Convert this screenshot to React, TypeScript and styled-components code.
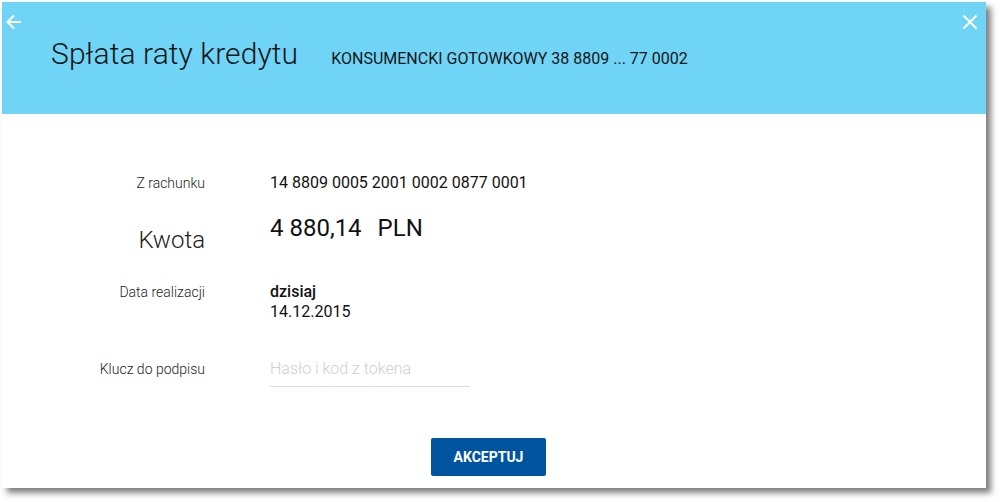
import React from "react";
import styled, { createGlobalStyle } from "styled-components";

const GlobalStyle = createGlobalStyle`
  html, body {
    margin: 0;
    padding: 0;
    background: #ffffff;
    font-family: Roboto, "Noto Sans", "Liberation Sans", sans-serif;
  }
`;

const StyledPage = styled.div`
  width: 1000px;
  height: 502px;
  padding: 2px 0 0 2px;
  box-sizing: border-box;
`;

const StyledDialog = styled.div`
  display: flex;
  flex-direction: column;
  width: 984px;
  height: 486px;
  background: #ffffff;
  box-shadow: 5px 5px 6px rgba(0, 0, 0, 0.5);
  overflow: hidden;
`;

const StyledHeader = styled.header`
  position: relative;
  display: flex;
  align-items: baseline;
  gap: 33px;
  height: 112px;
  box-sizing: border-box;
  padding: 34px 0 0 49px;
  background: #70d4f6;
`;

const StyledTitle = styled.h1`
  margin: 0;
  font-size: 30px;
  font-weight: 300;
  letter-spacing: 0.1px;
  color: #151515;
`;

const StyledSubtitle = styled.span`
  font-size: 16px;
  font-weight: 400;
  color: #151515;
`;

const StyledIconButton = styled.button<{ $side: "left" | "right" }>`
  position: absolute;
  top: 10px;
  ${({ $side }) => ($side === "left" ? "left: 2px;" : "right: 6px;")}
  display: flex;
  padding: 0;
  border: 0;
  background: none;
  color: #ffffff;
  cursor: pointer;
`;

const StyledBody = styled.main`
  display: flex;
  flex-direction: column;
  padding-top: 59px;
`;

const StyledRow = styled.div<{ $gap: number }>`
  display: grid;
  grid-template-columns: 203px 1fr;
  column-gap: 65px;
  align-items: start;
  margin-top: ${({ $gap }) => $gap}px;
`;

const StyledLabel = styled.div<{ $big?: boolean; $offset?: number }>`
  text-align: right;
  font-size: ${({ $big }) => ($big ? 24 : 14)}px;
  line-height: ${({ $big }) => ($big ? 28 : 20)}px;
  font-weight: 300;
  color: #1d1d1d;
  margin-top: ${({ $offset }) => $offset ?? 0}px;
`;

const StyledValue = styled.div<{ $big?: boolean; $strong?: boolean }>`
  font-size: ${({ $big }) => ($big ? 24 : 16)}px;
  line-height: ${({ $big }) => ($big ? 28 : 20)}px;
  font-weight: ${({ $strong }) => ($strong ? 500 : 400)};
  color: #111111;
`;

const StyledCurrency = styled.span`
  margin-left: 16px;
`;

const StyledInput = styled.input`
  width: 200px;
  box-sizing: border-box;
  margin-top: 2px;
  padding: 0 0 7px 0;
  border: 0;
  border-bottom: 1px solid #dddddd;
  outline: none;
  font-family: inherit;
  font-size: 16px;
  line-height: 20px;
  font-weight: 300;
  color: #111;

  &::placeholder {
    color: #cfcfcf;
  }
`;

const StyledFooter = styled.div`
  display: flex;
  justify-content: center;
  margin-top: 51px;
  padding-right: 11px;
`;

const StyledButton = styled.button`
  width: 115px;
  height: 38px;
  border: 0;
  border-radius: 2px;
  background: #01549f;
  color: #ffffff;
  font-family: inherit;
  font-size: 14px;
  font-weight: 700;
  cursor: pointer;
`;

function App() {
  return (
    <StyledPage>
      <GlobalStyle />
      <StyledDialog>
        <StyledHeader>
          <StyledIconButton $side="left" aria-label="Wstecz">
            <svg width="20" height="20" viewBox="0 0 20 20" fill="none" stroke="currentColor" strokeWidth="2">
              <path d="M17 10H4M10 3.5L3.5 10L10 16.5" />
            </svg>
          </StyledIconButton>
          <StyledTitle>Spłata raty kredytu</StyledTitle>
          <StyledSubtitle>KONSUMENCKI GOTOWKOWY 38 8809 ... 77 0002</StyledSubtitle>
          <StyledIconButton $side="right" aria-label="Zamknij">
            <svg width="20" height="20" viewBox="0 0 20 20" fill="none" stroke="currentColor" strokeWidth="2">
              <path d="M3.5 3.5L16.5 16.5M16.5 3.5L3.5 16.5" />
            </svg>
          </StyledIconButton>
        </StyledHeader>

        <StyledBody>
          <StyledRow $gap={0}>
            <StyledLabel>Z rachunku</StyledLabel>
            <StyledValue>14 8809 0005 2001 0002 0877 0001</StyledValue>
          </StyledRow>

          <StyledRow $gap={21}>
            <StyledLabel $big $offset={12}>Kwota</StyledLabel>
            <StyledValue $big>
              4 880,14<StyledCurrency>PLN</StyledCurrency>
            </StyledValue>
          </StyledRow>

          <StyledRow $gap={28}>
            <StyledLabel>Data realizacji</StyledLabel>
            <div>
              <StyledValue $strong>dzisiaj</StyledValue>
              <StyledValue>14.12.2015</StyledValue>
            </div>
          </StyledRow>

          <StyledRow $gap={35}>
            <StyledLabel $offset={2}>Klucz do podpisu</StyledLabel>
            <StyledInput type="password" placeholder="Hasło i kod z tokena" />
          </StyledRow>

          <StyledFooter>
            <StyledButton>AKCEPTUJ</StyledButton>
          </StyledFooter>
        </StyledBody>
      </StyledDialog>
    </StyledPage>
  );
}

export default App;
